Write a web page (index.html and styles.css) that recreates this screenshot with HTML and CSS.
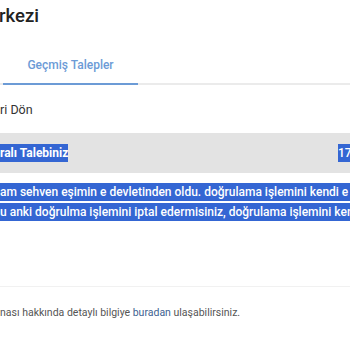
FILE: index.html
```html
<!DOCTYPE html>
<html lang="tr">
<head>
<meta charset="utf-8">
<link rel="stylesheet" href="styles.css">
</head>
<body>
<div class="page">
  <h1 class="title">rkezi</h1>
  <div class="tabs">
    <div class="tab-spacer"></div>
    <div class="tab active">Geçmiş Talepler</div>
  </div>
  <div class="back">ri Dön</div>
  <div class="bar">
    <span class="bar-title"><span class="sel bold">ralı Talebiniz</span></span>
    <span class="bar-date"><span class="sel">17.05.2023</span></span>
  </div>
  <div class="message">
    <div class="line"><span class="sel">am sehven eşimin e devletinden oldu. doğrulama işlemini kendi e devletimden yapmak istiyorum</span></div>
    <div class="line"><span class="sel">u anki doğrulma işlemini iptal edermisiniz, doğrulama işlemini kendim yapacağım</span></div>
  </div>
  <div class="divider"></div>
  <p class="info">nası hakkında detaylı bilgiye <a class="link" href="#">buradan</a> ulaşabilirsiniz.</p>
</div>
</body>
</html>
```
FILE: styles.css
```css
html, body {
  margin: 0;
  padding: 0;
  background: #ffffff;
}
body {
  font-family: Roboto, "Noto Sans", sans-serif;
  color: #333;
  overflow: hidden;
  width: 350px;
  height: 350px;
}
.page {
  display: flex;
  flex-direction: column;
  white-space: nowrap;
  overflow: hidden;
}
.title {
  margin: 4px 0 0 -1px;
  font-size: 18.5px;
  line-height: 24px;
  font-weight: 500;
  color: #222;
}
.tabs {
  display: flex;
  margin-top: 29px;
  height: 26px;
  border-bottom: 2px solid #ebebeb;
}
.tab-spacer {
  width: 3px;
}
.tab {
  width: 135px;
  text-align: center;
  font-size: 12px;
  font-weight: 500;
  color: #6c9bd6;
  line-height: 16px;
  border-bottom: 2px solid #6c9bd6;
  margin-bottom: -2px;
}
.back {
  margin-top: 17px;
  font-size: 12.5px;
  line-height: 16px;
  color: #333;
}
.bar {
  margin-top: 15px;
  height: 40px;
  background: #e3e3e3;
  display: grid;
  grid-template-columns: 338px max-content;
  align-items: center;
  font-size: 12px;
}
.sel {
  background: #3466d3;
  color: #fff;
  padding: 2px 0;
}
.bold {
  font-weight: 700;
}
.bar-date {
  font-weight: 500;
}
.message {
  margin-top: 9px;
  font-size: 12px;
  font-weight: 500;
}
.line {
  line-height: 20px;
}
.divider {
  margin-top: 64px;
  height: 1px;
  background: #f1f1f1;
}
.info {
  margin: 19px 0 0;
  font-size: 10.5px;
  line-height: 14px;
  color: #555;
}
.link {
  color: #3e5f91;
  text-decoration: none;
}
```
